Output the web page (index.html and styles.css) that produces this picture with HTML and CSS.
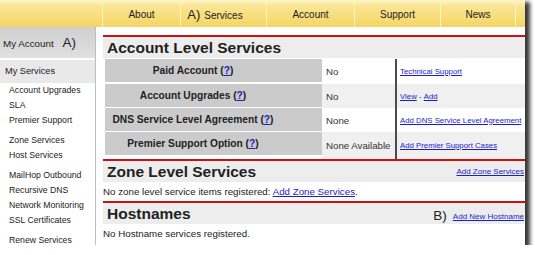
FILE: index.html
```html
<!DOCTYPE html>
<html lang="en">
<head>
    <meta charset="UTF-8">
    <title>My Services</title>
    <link rel="stylesheet" href="styles.css">
</head>
<body>
    <div class="frame">
        <nav class="topnav">
            <span class="nav-cell"></span>
            <a class="nav-cell" href="#">About</a>
            <a class="nav-cell" href="#"><span class="nav-note">A)</span>Services</a>
            <a class="nav-cell" href="#">Account</a>
            <a class="nav-cell" href="#">Support</a>
            <a class="nav-cell" href="#">News</a>
            <span class="nav-cell"></span>
        </nav>

        <div class="page">
            <aside class="sidebar">
                <div class="sb-head">My Account <span class="sb-note">A)</span></div>
                <div class="sb-title">My Services</div>
                <ul class="sb-group">
                    <li>Account Upgrades</li>
                    <li>SLA</li>
                    <li>Premier Support</li>
                </ul>
                <ul class="sb-group">
                    <li>Zone Services</li>
                    <li>Host Services</li>
                </ul>
                <ul class="sb-group">
                    <li>MailHop Outbound</li>
                    <li>Recursive DNS</li>
                    <li>Network Monitoring</li>
                    <li>SSL Certificates</li>
                </ul>
                <ul class="sb-group">
                    <li>Renew Services</li>
                </ul>
            </aside>

            <main class="content">
                <section class="block">
                    <div class="block-head">
                        <h2>Account Level Services</h2>
                    </div>
                    <div class="svc-grid">
                        <div class="svc-label">Paid Account (<a href="#">?</a>)</div>
                        <div class="svc-value">No</div>
                        <div class="svc-links"><a href="#">Technical Support</a></div>

                        <div class="svc-label">Account Upgrades (<a href="#">?</a>)</div>
                        <div class="svc-value alt">No</div>
                        <div class="svc-links alt"><a href="#">View</a>&nbsp;-&nbsp;<a href="#">Add</a></div>

                        <div class="svc-label">DNS Service Level Agreement (<a href="#">?</a>)</div>
                        <div class="svc-value">None</div>
                        <div class="svc-links"><a href="#">Add DNS Service Level Agreement</a></div>

                        <div class="svc-label">Premier Support Option (<a href="#">?</a>)</div>
                        <div class="svc-value alt">None Available</div>
                        <div class="svc-links alt"><a href="#">Add Premier Support Cases</a></div>
                    </div>
                </section>

                <section class="block">
                    <div class="block-head">
                        <h2>Zone Level Services</h2>
                        <a class="head-link" href="#">Add Zone Services</a>
                    </div>
                    <p class="block-text">No zone level service items registered: <a href="#">Add Zone Services</a>.</p>
                </section>

                <section class="block">
                    <div class="block-head">
                        <h2>Hostnames</h2>
                        <span><span class="head-note">B)</span><a class="head-link" href="#">Add New Hostname</a></span>
                    </div>
                    <p class="block-text">No Hostname services registered.</p>
                </section>
            </main>
        </div>
    </div>
</body>
</html>
```

FILE: styles.css
```css
body {
    margin: 0;
    background-color: #fff;
    font-family: "Liberation Sans", Arial, sans-serif;
    color: #222;
}
a {
    color: #1c1ccc;
}
.frame {
    width: 525px;
    height: 245px;
    overflow: hidden;
    background-color: #fff;
    box-shadow: 4px 3px 4px 1px rgba(0,0,0,0.78);
}

/* top navigation */
.topnav {
    display: grid;
    grid-template-columns: 102px 78px 86px 88px 86px 75px 1fr;
    height: 27px;
    background: linear-gradient(#fff6cc, #fbe697 20%, #f4d563);
}
.nav-cell {
    border-left: 1px solid #fff5c2;
    padding-top: 2px;
    line-height: 25px;
    text-align: center;
    font-size: 10px;
    color: #222;
    text-decoration: none;
}
.nav-cell:first-child {
    border-left: none;
}
.nav-note {
    font-size: 13px;
    margin-left: -17px;
    margin-right: 4px;
}

.page {
    display: flex;
    height: 218px;
}

/* sidebar */
.sidebar {
    flex: none;
    width: 95px;
    border-right: 1px solid #bdbdbd;
}
.sb-head {
    height: 31px;
    line-height: 31px;
    padding-left: 3px;
    font-size: 9.8px;
    background: linear-gradient(#cfcfcf, #e0e0e0);
}
.sb-note {
    font-size: 13.5px;
    margin-left: 6px;
}
.sb-title {
    margin-top: 2px;
    height: 23px;
    line-height: 23px;
    padding-left: 5px;
    font-size: 9.2px;
    background-color: #e9e9e9;
}
.sb-group {
    list-style: none;
    margin: 0;
    padding: 0 0 0 9px;
    font-size: 8.7px;
    line-height: 15px;
}
.sb-group + .sb-group {
    margin-top: 5px;
}

/* main content */
.content {
    flex: 1;
    margin-left: 7px;
    padding-top: 8px;
}
.block {
    border-top: 2px solid #cc1111;
}
.block-head {
    display: flex;
    align-items: center;
    justify-content: space-between;
    height: 21px;
    padding: 0 1px 0 4px;
    background-color: #ededed;
}
.block-head h2 {
    margin: 0;
    font-size: 15.5px;
    color: #222;
}
.head-link {
    font-size: 8px;
}
.head-note {
    font-size: 13.5px;
    margin-right: 6px;
    vertical-align: -1px;
}
.block-text {
    margin: 0;
    height: 19px;
    line-height: 19px;
    font-size: 9.75px;
}

.svc-grid {
    display: grid;
    grid-template-columns: 217px 73px 1fr;
    grid-template-rows: 25px 24px 24px 27px;
    margin: 1px 0 0 2px;
}
.svc-label {
    align-self: start;
    height: 23px;
    display: flex;
    align-items: center;
    justify-content: center;
    padding-right: 41px;
    background-color: #cbcbcb;
    font-size: 10.2px;
    font-weight: bold;
}
.svc-value {
    display: flex;
    align-items: center;
    padding-left: 4px;
    font-size: 9.7px;
    color: #333;
}
.svc-links {
    display: flex;
    align-items: center;
    padding-left: 3px;
    border-left: 2px solid #4a4a4a;
    font-size: 7.8px;
    white-space: nowrap;
}
.alt {
    background-color: #f0f0f0;
}
```
